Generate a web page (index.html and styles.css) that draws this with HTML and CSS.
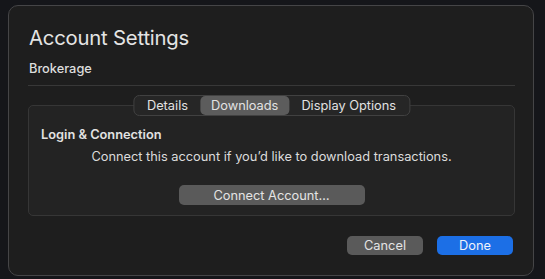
FILE: index.html
```html
<!DOCTYPE html>
<html>
<head>
  <title>Account Settings</title>
  <link rel="stylesheet" href="styles.css">
</head>
<body>
  <div class="dialog">
    <div class="header">
      <h1>Account Settings</h1>
      <div class="subtitle">Brokerage</div>
    </div>

    <div class="tab-box">
      <div class="segmented">
        <span class="segment">Details</span>
        <span class="segment selected">Downloads</span>
        <span class="segment">Display Options</span>
      </div>
      <div class="box-content">
        <div class="section-title">Login &amp; Connection</div>
        <div class="section-text">Connect this account if you’d like to download transactions.</div>
        <button class="btn btn-wide">Connect Account…</button>
      </div>
    </div>

    <div class="footer">
      <button class="btn btn-footer">Cancel</button>
      <button class="btn btn-footer btn-primary">Done</button>
    </div>
  </div>
</body>
</html>
```

FILE: styles.css
```css
body {
  margin: 0;
  padding: 5px 0 0 8px;
  background-color: #15161a;
  font-family: 'Inter', sans-serif;
  color: #dcdcdc;
}

.dialog {
  width: 526px;
  height: 271px;
  box-sizing: border-box;
  background-color: #1e1e1e;
  border: 1px solid #454547;
  border-radius: 10px;
  padding: 0 18px 0 19px;
}

.header {
  padding-top: 18px;
  border-bottom: 1px solid #383838;
  padding-bottom: 8px;
}

h1 {
  margin: 0 0 0 1px;
  font-size: 20.3px;
  line-height: 28px;
  font-weight: 400;
  color: #e4e4e4;
  letter-spacing: -0.2px;
}

.subtitle {
  margin: 9px 0 0 1px;
  font-size: 12.8px;
  line-height: 16px;
  font-weight: 500;
  color: #dddddd;
}

.tab-box {
  margin-top: 19px;
  border: 1px solid #363636;
  border-radius: 5px;
  background-color: #232323;
  height: 111px;
  box-sizing: border-box;
  position: relative;
}

.segmented {
  position: absolute;
  top: -11px;
  left: 50%;
  transform: translateX(-50%);
  display: flex;
  align-items: center;
  height: 21px;
  box-sizing: border-box;
  padding: 0 1px;
  border: 1px solid #414141;
  border-radius: 6px;
  background-color: #262626;
  font-size: 12.8px;
  font-weight: 400;
  color: #e2e2e2;
  white-space: nowrap;
}

.segment {
  padding: 0 12px;
  line-height: 19px;
  height: 19px;
  border-radius: 5px;
}

.segment.selected {
  background-color: #5c5c5c;
  padding: 0 11px;
}

.box-content {
  padding: 21px 12px 0 12px;
  display: flex;
  flex-direction: column;
  align-items: center;
}

.section-title {
  align-self: flex-start;
  font-size: 12.8px;
  line-height: 16px;
  font-weight: 600;
  color: #e2e2e2;
}

.section-text {
  margin-top: 6px;
  font-size: 12.8px;
  line-height: 16px;
  color: #dcdcdc;
}

.btn {
  font-family: 'Inter', sans-serif;
  font-size: 12.8px;
  font-weight: 400;
  color: #e4e4e4;
  background-color: #5a5a5a;
  border: none;
  border-radius: 5px;
  height: 20px;
  padding: 0;
  box-sizing: border-box;
}

.btn-wide {
  margin-top: 20px;
  width: 186px;
}

.footer {
  display: flex;
  justify-content: flex-end;
  gap: 14px;
  margin-top: 20px;
  padding-right: 2px;
}

.btn-footer {
  width: 76px;
  height: 19px;
}

.btn-primary {
  background-color: #1c6fe6;
  color: #eef3fb;
}
```
